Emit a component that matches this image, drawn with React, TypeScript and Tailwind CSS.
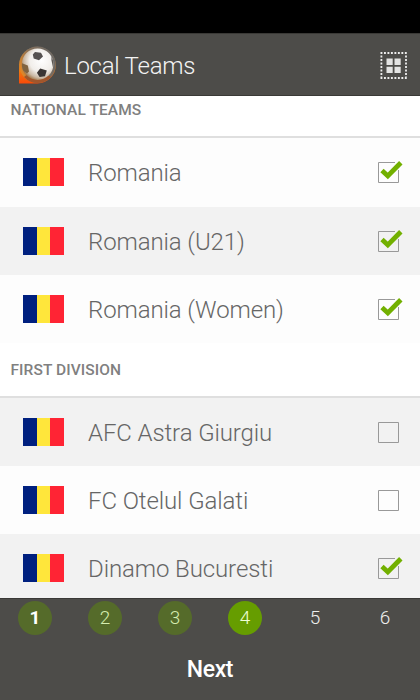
const sections = [
    {
        title: "NATIONAL TEAMS",
        rowClass: "h-[68px] first-of-type:h-[69px] pb-px",
        teams: [
            { name: "Romania", checked: true, shaded: false },
            { name: "Romania (U21)", checked: true, shaded: true },
            { name: "Romania (Women)", checked: true, shaded: false },
        ],
    },
    {
        title: "FIRST DIVISION",
        rowClass: "h-[68px]",
        teams: [
            { name: "AFC Astra Giurgiu", checked: false, shaded: true },
            { name: "FC Otelul Galati", checked: false, shaded: false },
            { name: "Dinamo Bucuresti", checked: true, shaded: true },
        ],
    },
]

const steps = [
    { label: "1", className: "bg-[#556b2a] text-white font-bold" },
    { label: "2", className: "bg-[#556b2a] text-[#d5edaf] font-light" },
    { label: "3", className: "bg-[#556b2a] text-[#d5edaf] font-light" },
    { label: "4", className: "bg-[#669d00] text-[#efffd5] font-light" },
    { label: "5", className: "text-[#eeeeee] font-light" },
    { label: "6", className: "text-[#eeeeee] font-light" },
]

function BallLogo() {
    return (
        <svg className="w-[38px] h-[38px] shrink-0" viewBox="0 0 38 38">
            <defs>
                <linearGradient id="pin" x1="0" y1="0" x2="0" y2="1">
                    <stop offset="0" stopColor="#77736d" />
                    <stop offset="0.35" stopColor="#96703f" />
                    <stop offset="0.65" stopColor="#ee7a12" />
                    <stop offset="1" stopColor="#f84a08" />
                </linearGradient>
                <linearGradient id="rim" x1="0" y1="0.7" x2="1" y2="0.3">
                    <stop offset="0" stopColor="#e98a22" />
                    <stop offset="0.45" stopColor="#86705a" />
                    <stop offset="1" stopColor="#6b6967" />
                </linearGradient>
                <radialGradient id="ball" cx="0.62" cy="0.38" r="0.68">
                    <stop offset="0" stopColor="#ffffff" />
                    <stop offset="0.55" stopColor="#f1eeea" />
                    <stop offset="0.82" stopColor="#c9b7a2" />
                    <stop offset="1" stopColor="#9b6a35" />
                </radialGradient>
                <clipPath id="ballClip">
                    <circle cx="19.6" cy="18.2" r="15.8" />
                </clipPath>
            </defs>
            <path d="M1 37.5V18.5A18.4 18.4 0 1 1 19.5 37.5Z" fill="url(#pin)" />
            <circle cx="19.5" cy="18.8" r="18.2" fill="url(#rim)" />
            <path d="M6 31A18.2 18.2 0 0 0 33 31L28 28H10Z" fill="#a0562c" />
            <circle cx="19.6" cy="18.2" r="15.8" fill="url(#ball)" />
            <g clipPath="url(#ballClip)">
                <path d="M17 6L23 6.7L25 10.6L21 14.2L15.7 12.6L14.8 8.5Z" fill="#555150" />
                <path d="M22.2 22.5L28.8 24.6L27 30.2L21.6 31L18.9 26.8Z" fill="#3b3634" />
                <path d="M4 17.2L9.8 19.5L11 25.5L9 27.6L3 23Z" fill="#806340" />
                <path d="M33.5 10L37 12V23L34.8 20.6L33.4 14Z" fill="#5c5752" />
            </g>
        </svg>
    )
}

function GridIcon() {
    return (
        <svg className="w-[27px] h-[27px]" viewBox="0 0 27 27">
            <path
                d="M0.5 1H27M0.5 26H27M1.4 3.6V25M26 3.6V25"
                stroke="#eeeeee"
                strokeWidth="1.8"
                strokeDasharray="1.9 1.58"
            />
            <path d="M6.5 6.5h6.2v6.4H6.5zM14.5 6.5h6.2v6.4h-6.2zM6.5 14.8h6.2V21H6.5zM14.5 14.8h6.2V21h-6.2z" fill="#e4e4e3" />
        </svg>
    )
}

function Flag() {
    return (
        <div className="flex w-[41px] h-7 shrink-0">
            <div className="flex-1 bg-[#00207f]" />
            <div className="flex-1 bg-[#ffe63b]" />
            <div className="flex-1 bg-[#ff2434]" />
        </div>
    )
}

function Checkbox({ checked }: { checked: boolean }) {
    return (
        <svg className="w-[25px] h-[24px] shrink-0" viewBox="0 0 25 24">
            {checked ? (
                <>
                    <path d="M17 2.5H0.5V22.5H20.5V10" fill="none" stroke="#999999" />
                    <path d="M4 10.6L9.8 16L22.8 2.8" fill="none" stroke="#72b000" strokeWidth="4.8" />
                </>
            ) : (
                <path d="M0.5 2.5H20.5V22.5H0.5Z" fill="none" stroke="#999999" />
            )}
        </svg>
    )
}

export default function App() {
    return (
        <main className="flex flex-col h-[700px] w-[420px] overflow-hidden bg-[#fdfdfd] font-[Roboto,sans-serif]">
            <div className="h-[33px] shrink-0 bg-black" />
            <header className="flex items-center h-[63px] shrink-0 border-t border-b border-t-[#3a3936] border-b-[#3a3936] bg-[#4d4c49] pl-[18px] pr-[13px]">
                <BallLogo />
                <h1 className="ml-2 flex-1 pt-[2px] text-[24px] tracking-[-0.25px] font-light text-[#f3f3f3]">Local Teams</h1>
                <div className="pt-[2px]">
                    <GridIcon />
                </div>
            </header>

            <div className="flex flex-1 min-h-0 flex-col justify-end overflow-hidden">
                <div className="-mb-[4px] shrink-0">
                    {sections.map((section) => (
                        <section key={section.title}>
                            <h2 className="flex items-end h-[55px] border-b-2 border-[#dfdfdf] bg-white pl-[10.5px] pb-[16px] text-[15.5px] tracking-[0.08px] leading-[20px] font-medium text-[#808080]">
                                {section.title}
                            </h2>
                            {section.teams.map((team) => (
                                <div
                                    key={team.name}
                                    className={`flex items-center pl-[23px] pr-[17px] ${section.rowClass} ${team.shaded ? "bg-[#f2f2f2]" : "bg-[#fdfdfd]"}`}
                                >
                                    <Flag />
                                    <span className="ml-6 flex-1 pt-[2px] text-[24px] tracking-[-0.1px] font-light text-[#666666]">{team.name}</span>
                                    <Checkbox checked={team.checked} />
                                </div>
                            ))}
                        </section>
                    ))}
                </div>
            </div>

            <footer className="h-[102px] shrink-0 border-t border-[#3a3936] bg-[#4d4c49]">
                <div className="grid grid-cols-6 justify-items-center pt-[1.5px]">
                    {steps.map((step) => (
                        <div
                            key={step.label}
                            className={`flex items-center justify-center w-[34px] h-[34px] rounded-full pt-[2px] text-[19px] ${step.className}`}
                        >
                            {step.label}
                        </div>
                    ))}
                </div>
                <button className="mt-[19.5px] block w-full text-center text-[23px] tracking-[-0.4px] leading-[32px] font-medium text-white">Next</button>
            </footer>
        </main>
    )
}
